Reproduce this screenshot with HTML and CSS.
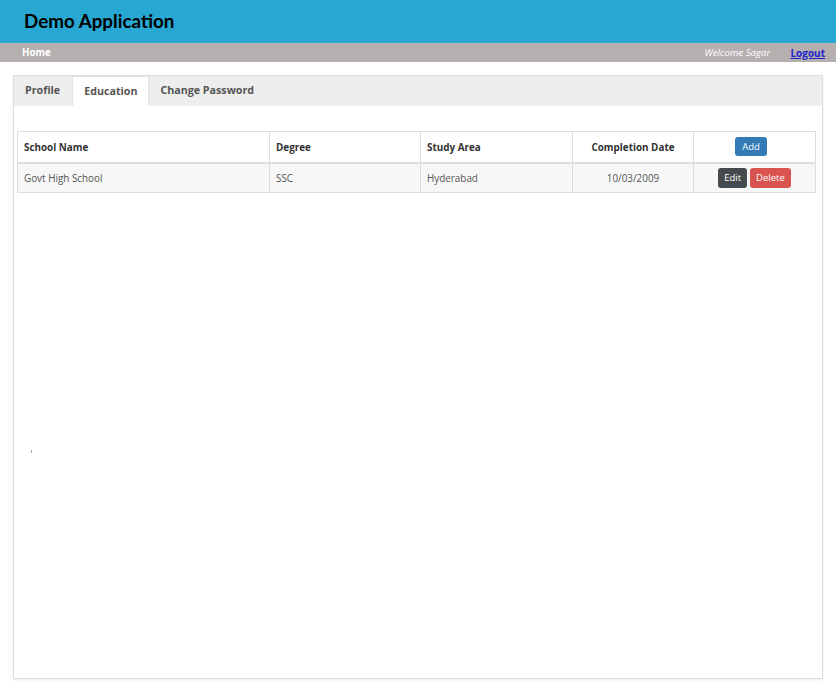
FILE: index.html
```html
<!DOCTYPE html>
<html>
<head>
<meta charset="utf-8">
<link rel="stylesheet" href="styles.css">
</head>
<body>
<header class="topbar">
  <h1 class="brand">Demo Application</h1>
</header>
<nav class="navbar">
  <a class="nav-home" href="#">Home</a>
  <div class="nav-right">
    <span class="welcome">Welcome Sagar</span>
    <a class="logout" href="#">Logout</a>
  </div>
</nav>
<main class="panel">
  <div class="tabs">
    <div class="tab">Profile</div>
    <div class="tab active">Education</div>
    <div class="tab">Change Password</div>
  </div>
  <div class="tab-body">
    <table class="grid">
      <thead>
        <tr>
          <th class="c-school">School Name</th>
          <th class="c-degree">Degree</th>
          <th class="c-area">Study Area</th>
          <th class="c-date center">Completion Date</th>
          <th class="c-act center"><button class="btn btn-primary">Add</button></th>
        </tr>
      </thead>
      <tbody>
        <tr>
          <td>Govt High School</td>
          <td>SSC</td>
          <td>Hyderabad</td>
          <td class="center">10/03/2009</td>
          <td class="center"><button class="btn btn-dark">Edit</button><button class="btn btn-danger">Delete</button></td>
        </tr>
      </tbody>
    </table>
    <span class="speck"></span>
  </div>
</main>
</body>
</html>
```
FILE: styles.css
```css
* { box-sizing: border-box; }
html, body { margin: 0; padding: 0; background: #fff; }
body { font-family: "Open Sans", "DejaVu Sans", sans-serif; color: #333; width: 836px; height: 689px; overflow: hidden; }

.topbar { background: #27a7d1; height: 43px; display: flex; align-items: center; padding-left: 24px; }
.brand { margin: 0; font-family: "Lato", "Open Sans", sans-serif; font-weight: 700; font-size: 18.8px; color: #000; padding-bottom: 3px; }

.navbar { background: #b5b0af; height: 19px; display: flex; align-items: center; justify-content: space-between; padding: 0 11px 0 22px; font-size: 9.7px; }
.nav-home { color: #fff; font-weight: 700; text-decoration: none; }
.nav-right { display: flex; align-items: center; gap: 20px; }
.welcome { color: #fff; font-style: italic; }
.logout { color: #2222cc; font-weight: 700; text-decoration: underline; font-size: 10px; }

.panel { margin: 13px 0 0 13px; width: 810px; height: 604px; border: 1px solid #ddd; box-shadow: 0 1px 2px rgba(0,0,0,0.08); background: #fff; }
.tabs { display: flex; background: #eee; height: 30px; }
.tab { padding: 0 12px 0 11px; height: 30px; line-height: 29px; font-size: 10.7px; font-weight: 700; color: #555; }
.tab.active { background: #fff; border: 1px solid #e4e4e4; border-bottom: none; padding: 0 11px 0 11px; }
.tab-body { padding: 25px 6px 0 3px; position: relative; height: 572px; }

.grid { width: 799px; border-collapse: collapse; font-size: 9.9px; border: 1px solid #ddd; }
.grid th, .grid td { border: 1px solid #ddd; padding: 0 6px; text-align: left; }
.grid th { height: 31px; font-weight: 700; color: #333; border-bottom: 2px solid #ddd; }
.grid td { height: 30px; background: #f7f7f7; color: #555; }
.grid .center { text-align: center; }
.c-school { width: 252px; }
.c-degree { width: 151px; }
.c-area { width: 152px; }
.c-date { width: 121px; }

.btn { border: none; border-radius: 3px; color: #fff; font-family: inherit; font-size: 9.5px; height: 20px; padding: 0 6px; vertical-align: middle; cursor: pointer; }
.btn-primary { background: #337ab7; padding: 0 7px; height: 19px; margin-right: 7px; }
.btn-dark { background: #454a4f; margin-right: 3px; }
.btn-danger { background: #d9534f; }

.speck { position: absolute; left: 17px; top: 344px; width: 1px; height: 3px; background: #9ab; }
```
